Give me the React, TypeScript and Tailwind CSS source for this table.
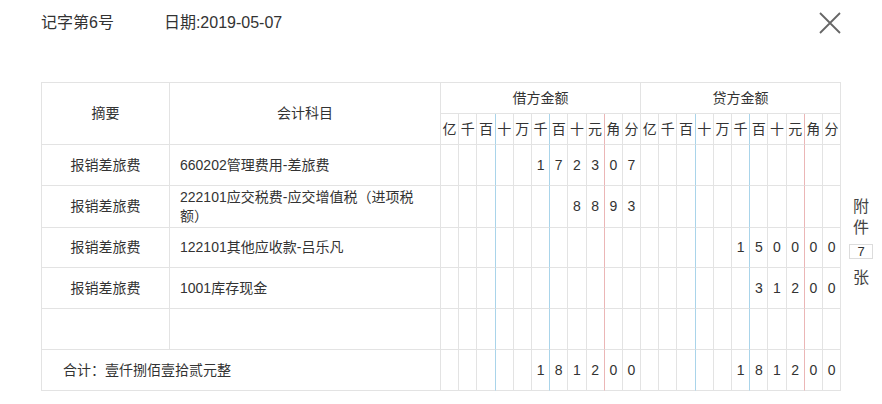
import React from "react";

const FONT = { fontFamily: '"Liberation Sans", "Noto Sans CJK SC", Arial, sans-serif' };

const units = ["亿", "千", "百", "十", "万", "千", "百", "十", "元", "角", "分"];

const GRAY = "border-r border-b border-r-[#e3e3e3] border-b-[#e3e3e3]";
const BLUE = "border-r border-b border-r-[#a9d4ea] border-b-[#e3e3e3]";
const RED = "border-r border-b border-r-[#ebb6b6] border-b-[#e3e3e3]";

function cellBorder(i: number) {
  if (i === 2 || i === 5) return BLUE;
  if (i === 8) return RED;
  return GRAY;
}

function fill(v: string): string[] {
  const arr = Array(11).fill("");
  const chars = v.split("");
  const start = 11 - chars.length;
  chars.forEach((c, k) => (arr[start + k] = c));
  return arr;
}

type Row = { summary: string; account: string; debit: string; credit: string };

const rows: Row[] = [
  { summary: "报销差旅费", account: "660202管理费用-差旅费", debit: "172307", credit: "" },
  { summary: "报销差旅费", account: "222101应交税费-应交增值税（进项税额）", debit: "8893", credit: "" },
  { summary: "报销差旅费", account: "122101其他应收款-吕乐凡", debit: "", credit: "150000" },
  { summary: "报销差旅费", account: "1001库存现金", debit: "", credit: "31200" },
  { summary: "", account: "", debit: "", credit: "" },
];

function Amounts({ debit, credit }: { debit: string; credit: string }) {
  const d = fill(debit);
  const c = fill(credit);
  return (
    <div className="flex w-[400px] shrink-0">
      {[...d, ...c].map((ch, i) => (
        <div
          key={i}
          className={`flex-1 min-w-0 flex items-center justify-center text-[14px] text-[#333] ${cellBorder(i % 11)}`}
        >
          {ch}
        </div>
      ))}
    </div>
  );
}

export default function App() {
  return (
    <div className="w-[882px] h-[404px] bg-white text-[#333] overflow-hidden" style={FONT}>
      <div className="flex items-center justify-between pl-[41px] pr-[41px] pt-[12px] h-[34px]">
        <div className="flex items-center text-[16px] leading-[22px] text-[#333]">
          <span>记字第6号</span>
          <span className="ml-[50px]">日期:2019-05-07</span>
        </div>
        <svg width="22" height="22" viewBox="0 0 22 22" className="mt-[-1px]">
          <path d="M1 1 L21 21 M21 1 L1 21" stroke="#666" strokeWidth="1.8" fill="none" />
        </svg>
      </div>

      <div className="flex items-start pl-[41px] mt-[48px]">
        <div className="w-[800px] shrink-0 border-l border-t border-l-[#e3e3e3] border-t-[#e3e3e3]">
          <div className="flex h-[62px]">
            <div className={`w-[128px] shrink-0 flex items-center justify-center text-[14px] ${GRAY}`}>摘要</div>
            <div className={`w-[271px] shrink-0 flex items-center justify-center text-[14px] ${GRAY}`}>会计科目</div>
            <div className="w-[400px] shrink-0 flex flex-col">
              <div className="flex h-[31px]">
                <div className={`flex-1 flex items-center justify-center text-[14px] ${GRAY}`}>借方金额</div>
                <div className={`flex-1 flex items-center justify-center text-[14px] ${GRAY}`}>贷方金额</div>
              </div>
              <div className="flex h-[31px]">
                {[...units, ...units].map((u, i) => (
                  <div
                    key={i}
                    className={`flex-1 min-w-0 flex items-center justify-center text-[14px] ${cellBorder(i % 11)}`}
                  >
                    {u}
                  </div>
                ))}
              </div>
            </div>
          </div>

          {rows.map((r, idx) => (
            <div key={idx} className={`flex ${idx === 1 ? "h-[42px]" : idx === 2 ? "h-[40px]" : "h-[41px]"}`}>
              <div className={`w-[128px] shrink-0 flex items-center justify-center text-[14px] ${GRAY}`}>{r.summary}</div>
              <div className={`w-[271px] shrink-0 flex items-center px-[10px] text-[14px] leading-[19px] ${GRAY}`}>
                <span>{r.account}</span>
              </div>
              <Amounts debit={r.debit} credit={r.credit} />
            </div>
          ))}

          <div className="flex h-[41px]">
            <div className={`w-[399px] shrink-0 flex items-center pl-[21px] text-[14px] ${GRAY}`}>
              合计：壹仟捌佰壹拾贰元整
            </div>
            <Amounts debit="181200" credit="181200" />
          </div>
        </div>

        <div className="ml-[8px] w-[24px] mt-[114px] flex flex-col items-center text-[16px] text-[#444]">
          <div className="leading-[21px]">附</div>
          <div className="leading-[21px]">件</div>
          <div className="mt-[6px] w-[24px] h-[15px] border border-[#dcdcdc] flex items-center justify-center text-[13px] leading-[13px] text-[#333]">
            7
          </div>
          <div className="mt-[8px] leading-[21px]">张</div>
        </div>
      </div>
    </div>
  );
}
